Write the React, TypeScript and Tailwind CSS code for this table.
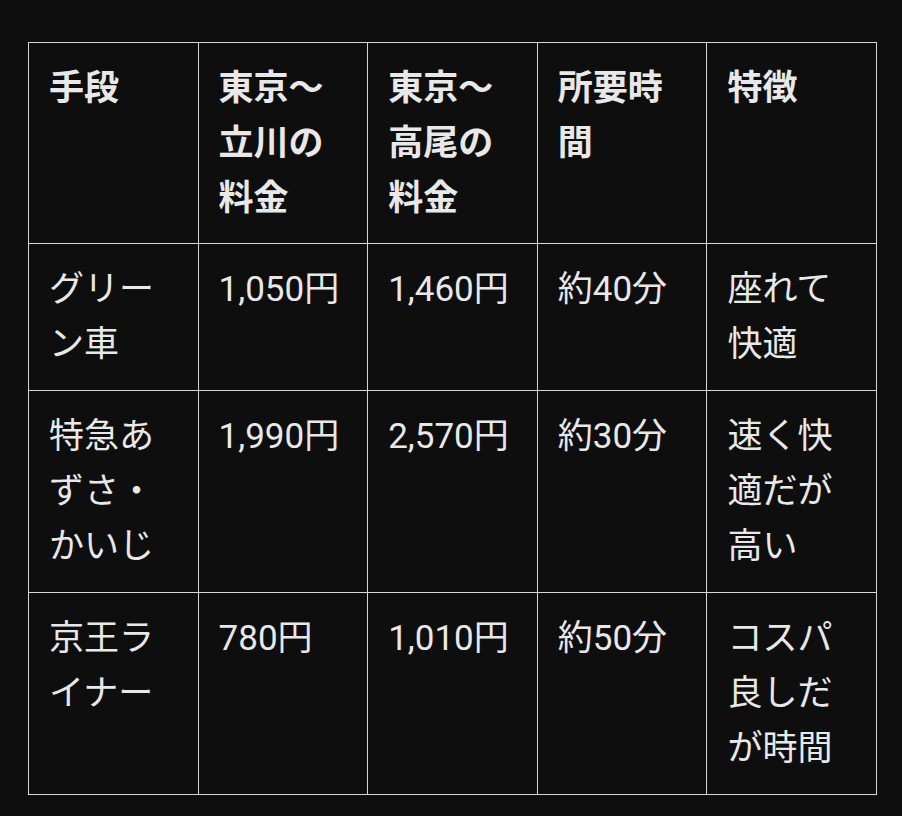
import React from "react";

const header = ["手段", "東京〜立川の料金", "東京〜高尾の料金", "所要時間", "特徴"];
const rows = [
  ["グリーン車", "1,050円", "1,460円", "約40分", "座れて快適"],
  ["特急あずさ・かいじ", "1,990円", "2,570円", "約30分", "速く快適だが高い"],
  ["京王ライナー", "780円", "1,010円", "約50分", "コスパ良しだが時間"],
];

export default function App() {
  return (
    <div
      className="min-h-[816px] w-full bg-[#0e0e0e] pl-[28px] pr-[26px] pt-[42px] text-[#e8e8e8]"
      style={{ fontFamily: 'Roboto, "Noto Sans CJK JP", sans-serif' }}
    >
      <table className="w-[849px] table-fixed border-collapse text-[35px] leading-[55px]">
        <thead>
          <tr>
            {header.map((h, i) => (
              <th
                key={i}
                className="border border-[#d6d6d6] px-[20px] pt-[18px] pb-[17px] text-left align-top font-bold break-all"
              >
                {h}
              </th>
            ))}
          </tr>
        </thead>
        <tbody>
          {rows.map((r, ri) => (
            <tr key={ri}>
              {r.map((c, ci) => (
                <td
                  key={ci}
                  className="border border-[#d6d6d6] px-[20px] pt-[18px] pb-[18px] align-top font-normal break-all"
                >
                  {c}
                </td>
              ))}
            </tr>
          ))}
        </tbody>
      </table>
    </div>
  );
}
